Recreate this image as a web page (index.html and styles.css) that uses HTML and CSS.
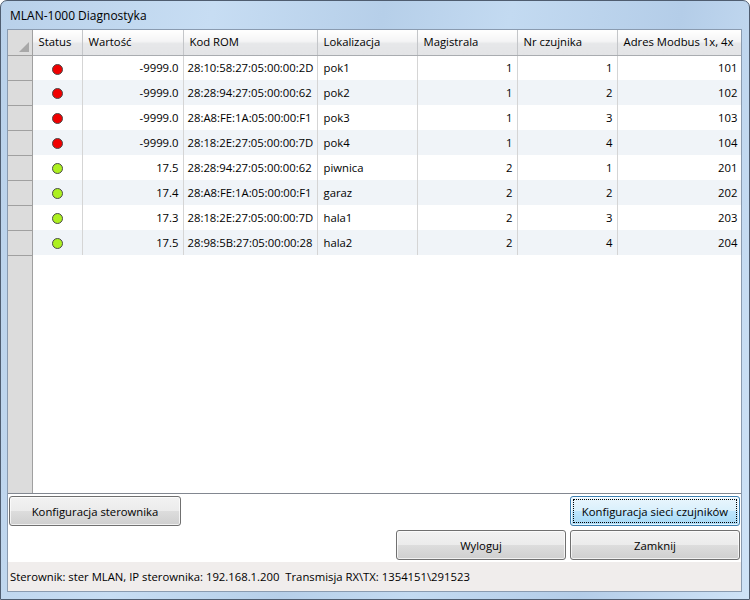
FILE: index.html
```html
<!DOCTYPE html>
<html lang="pl">
<head>
<meta charset="utf-8">
<title>MLAN-1000 Diagnostyka</title>
<link rel="stylesheet" href="styles.css">
</head>
<body>
<div class="window">
  <div class="titlebar">MLAN-1000 Diagnostyka</div>
  <div class="client">
    <div class="grid">
      <table class="data">
        <colgroup>
          <col class="c-rh"><col class="c-st"><col class="c-val"><col class="c-rom"><col class="c-lok"><col class="c-mag"><col class="c-nr"><col class="c-adr">
        </colgroup>
        <thead>
          <tr>
            <th class="rh corner"><span class="tri"></span></th>
            <th>Status</th>
            <th>Wartość</th>
            <th>Kod ROM</th>
            <th>Lokalizacja</th>
            <th>Magistrala</th>
            <th>Nr czujnika</th>
            <th>Adres Modbus 1x, 4x</th>
          </tr>
        </thead>
        <tbody>
          <tr><td class="rh"></td><td class="st"><span class="dot red"></span></td><td class="num">-9999.0</td><td>28:10:58:27:05:00:00:2D</td><td class="txt">pok1</td><td class="num">1</td><td class="num">1</td><td class="num">101</td></tr>
          <tr class="alt"><td class="rh"></td><td class="st"><span class="dot red"></span></td><td class="num">-9999.0</td><td>28:28:94:27:05:00:00:62</td><td class="txt">pok2</td><td class="num">1</td><td class="num">2</td><td class="num">102</td></tr>
          <tr><td class="rh"></td><td class="st"><span class="dot red"></span></td><td class="num">-9999.0</td><td>28:A8:FE:1A:05:00:00:F1</td><td class="txt">pok3</td><td class="num">1</td><td class="num">3</td><td class="num">103</td></tr>
          <tr class="alt"><td class="rh"></td><td class="st"><span class="dot red"></span></td><td class="num">-9999.0</td><td>28:18:2E:27:05:00:00:7D</td><td class="txt">pok4</td><td class="num">1</td><td class="num">4</td><td class="num">104</td></tr>
          <tr><td class="rh"></td><td class="st"><span class="dot green"></span></td><td class="num">17.5</td><td>28:28:94:27:05:00:00:62</td><td class="txt">piwnica</td><td class="num">2</td><td class="num">1</td><td class="num">201</td></tr>
          <tr class="alt"><td class="rh"></td><td class="st"><span class="dot green"></span></td><td class="num">17.4</td><td>28:A8:FE:1A:05:00:00:F1</td><td class="txt">garaz</td><td class="num">2</td><td class="num">2</td><td class="num">202</td></tr>
          <tr><td class="rh"></td><td class="st"><span class="dot green"></span></td><td class="num">17.3</td><td>28:18:2E:27:05:00:00:7D</td><td class="txt">hala1</td><td class="num">2</td><td class="num">3</td><td class="num">203</td></tr>
          <tr class="alt"><td class="rh"></td><td class="st"><span class="dot green"></span></td><td class="num">17.5</td><td>28:98:5B:27:05:00:00:28</td><td class="txt">hala2</td><td class="num">2</td><td class="num">4</td><td class="num">204</td></tr>
        </tbody>
      </table>
    </div>
    <div class="buttons">
      <div class="btn-row">
        <button class="btn btn-left">Konfiguracja sterownika</button>
        <button class="btn btn-wide focused"><span class="focus-rect">Konfiguracja sieci czujników</span></button>
      </div>
      <div class="btn-row right">
        <button class="btn btn-wide">Wyloguj</button>
        <button class="btn btn-wide">Zamknij</button>
      </div>
    </div>
    <div class="statusbar">Sterownik: ster MLAN, IP sterownika: 192.168.1.200&nbsp; Transmisja RX\TX: 1354151\291523</div>
  </div>
</div>
</body>
</html>
```

FILE: styles.css
```css
* { box-sizing: border-box; }
html, body { margin: 0; padding: 0; }
body {
  width: 750px;
  height: 600px;
  overflow: hidden;
  font-family: "Segoe UI", "Open Sans", "Noto Sans", sans-serif;
  font-size: 11.3px;
  color: #000;
  background: #fff;
}
.window {
  width: 750px;
  height: 600px;
  border: 1px solid #4f5d70;
  border-radius: 7px 7px 0 0;
  background: linear-gradient(100deg, #b9d1ea 0%, #c7ddf3 25%, #b6cfe9 45%, #c3daf1 60%, #b4cde8 80%, #cfe3f7 100%);
  display: flex;
  flex-direction: column;
  padding: 0 7px 7px 6px;
}
.titlebar {
  height: 28px;
  flex: none;
  padding: 6px 0 0 3px;
  font-size: 12px;
  color: #000;
}
.client {
  flex: 1;
  background: #fff;
  border: 1px solid #8a9bb0;
  display: flex;
  flex-direction: column;
  min-height: 0;
}
.grid {
  height: 464px;
  flex: none;
  border-bottom: 1px solid #828790;
  background: linear-gradient(to right, #dcdcdc 0, #dcdcdc 24px, #a0a0a0 24px, #a0a0a0 25px, #fff 25px);
  overflow: hidden;
}
.data {
  border-collapse: collapse;
  table-layout: fixed;
  width: 734px;
}
.c-rh { width: 24px; }
.c-st { width: 50px; }
.c-val { width: 101px; }
.c-rom { width: 134px; }
.c-lok { width: 100px; }
.c-mag { width: 100px; }
.c-nr { width: 100px; }
.c-adr { width: 125px; }
.data th {
  height: 25px;
  padding: 0 0 1px 6px;
  text-align: left;
  font-weight: normal;
  color: #000;
  background: linear-gradient(#ffffff 0%, #f4f4f5 45%, #e6e7e9 55%, #e3e4e6 100%);
  border-right: 1px solid #c4c6c9;
  border-bottom: 1px solid #a9acb0;
  white-space: nowrap;
  overflow: hidden;
}
.data th.corner {
  background: #dcdcdc;
  border-right: 1px solid #a0a0a0;
  border-bottom: 1px solid #a0a0a0;
  padding: 0;
  position: relative;
}
.tri {
  position: absolute;
  right: 3px;
  bottom: 3px;
  width: 0;
  height: 0;
  border-left: 10px solid transparent;
  border-bottom: 10px solid #a8a8a8;
}
.data td {
  height: 25px;
  padding: 0 4px 1px 4px;
  border-right: 1px solid #d5d5d5;
  white-space: nowrap;
  overflow: hidden;
  color: #000;
}
.data tr.alt td { background: #f0f4f8; }
.data td.rh, .data tr.alt td.rh {
  background: #dcdcdc;
  border-right: 1px solid #a0a0a0;
  border-bottom: 1px solid #a0a0a0;
  padding: 0;
}
.data td.num { text-align: right; padding-right: 4px; }
.data td.txt { padding-left: 6px; }
.data td.st { text-align: center; padding: 0 0 0 1px; }
.dot {
  display: inline-block;
  width: 11px;
  height: 11px;
  border-radius: 50%;
  border: 1px solid #4a4a4a;
  vertical-align: middle;
}
.dot.red { background: #f00000; }
.dot.green { background: #adf020; }
.buttons {
  flex: none;
  display: flex;
  flex-direction: column;
  gap: 4px;
  padding: 2px 1px 0 1px;
}
.btn-row {
  display: flex;
  justify-content: space-between;
}
.btn-row.right { justify-content: flex-end; gap: 4px; }
.btn {
  height: 30px;
  font-family: inherit;
  font-size: 11.3px;
  color: #000;
  border: 1px solid #707070;
  border-radius: 3px;
  background: linear-gradient(#f2f2f2 0%, #ebebeb 50%, #dddddd 50%, #cfcfcf 100%);
  box-shadow: inset 0 0 0 1px rgba(255,255,255,0.7);
  padding: 0;
  cursor: default;
}
.btn-left { width: 172px; }
.btn-wide { width: 170px; }
.btn.focused {
  border-color: #3c7fb1;
  background: linear-gradient(#eaf6fd 0%, #d9f0fc 50%, #bee6fd 50%, #a7d9f5 100%);
  padding: 2px;
}
.focus-rect {
  display: flex;
  align-items: center;
  justify-content: center;
  height: 100%;
  border: 1px dotted #000;
}
.statusbar {
  flex: 1;
  margin-top: 2px;
  background: #f0edec;
  padding: 0 0 0 2px;
  display: flex;
  align-items: center;
  font-size: 11.3px;
}
```
